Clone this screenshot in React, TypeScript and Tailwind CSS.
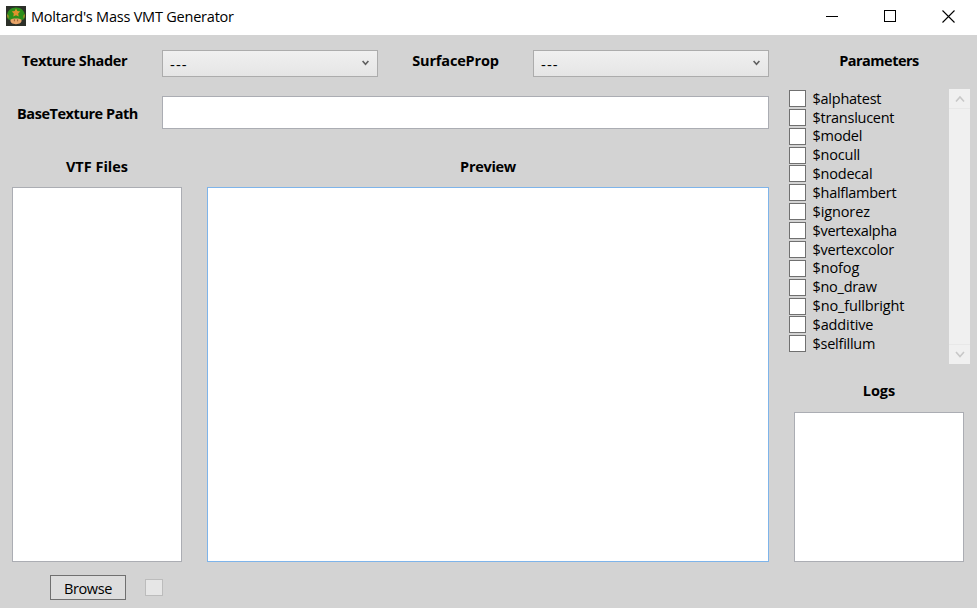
import React from "react";

const parameters: { name: string; tracking: string }[] = [
  { name: "$alphatest", tracking: "tracking-[-0.25px]" },
  { name: "$translucent", tracking: "tracking-[-0.27px]" },
  { name: "$model", tracking: "tracking-[-0.25px]" },
  { name: "$nocull", tracking: "tracking-[-0.22px]" },
  { name: "$nodecal", tracking: "tracking-[-0.22px]" },
  { name: "$halflambert", tracking: "tracking-[-0.27px]" },
  { name: "$ignorez", tracking: "tracking-[-0.12px]" },
  { name: "$vertexalpha", tracking: "tracking-[-0.32px]" },
  { name: "$vertexcolor", tracking: "tracking-[-0.25px]" },
  { name: "$nofog", tracking: "tracking-[-0.12px]" },
  { name: "$no_draw", tracking: "tracking-[-0.28px]" },
  { name: "$no_fullbright", tracking: "tracking-[-0.14px]" },
  { name: "$additive", tracking: "tracking-[-0.12px]" },
  { name: "$selfillum", tracking: "tracking-[-0.25px]" },
];

function AppIcon() {
  return (
    <svg width="20" height="20" viewBox="0 0 20 20">
      <rect width="20" height="20" fill="#2c3029" />
      <path d="M1 9.500C1.200 4.800 4.800 1.500 10 1.500s8.800 3.300 9 8c.1 3-1.300 4.600-3.300 4.600h-11.400c-2 0-3.400-1.600-3.300-4.600z" fill="#2c8f1b" />
      <path d="M10 2.500l1.300 2.500 3 .5-2.100 2.100.5 2.900-2.700-1.300-2.700 1.300.5-2.900-2.100-2.100 3-.5z" fill="#df922c" />
      <path d="M1.100 8.200c1.600.3 2.200 2.200 1.300 4.200-1.200-.9-1.600-2.600-1.300-4.200zM18.900 8.200c-1.600.3-2.200 2.200-1.300 4.200 1.200-.9 1.600-2.600 1.300-4.200z" fill="#a58a28" />
      <path d="M4.500 13.800c1.500-1.900 9.500-1.900 11 0 .6 2.600-1.700 4.400-5.500 4.400s-6.100-1.800-5.500-4.400z" fill="#e8a468" />
      <path d="M8.400 13.300v2M11.600 13.300v2" stroke="#8a5a30" strokeWidth=".9" />
    </svg>
  );
}

function Chevron({ up = false, className }: { up?: boolean; className: string }) {
  return (
    <svg width="10" height="8" viewBox="0 0 10 8" className={className} fill="none" stroke="currentColor">
      <path d={up ? "M1 6.500L5 2l4 4.500" : "M1 1L5 5.500l4-4.500"} strokeWidth="1.600" />
    </svg>
  );
}

function Select({ width }: { width: string }) {
  return (
    <div className={`flex h-[27px] shrink-0 items-center justify-between border border-[#acacac] bg-linear-to-b from-[#f0f0f0] to-[#e5e5e5] pr-2 pl-[7px] ${width}`}>
      <span className="pt-[1px] text-[15px] leading-none tracking-[1.1px]">---</span>
      <svg width="7" height="6" viewBox="0 0 7 6" fill="none" stroke="#606060" strokeWidth="1.600" className="mb-[2px]">
        <path d="M.6 1L3.500 4.300 6.400 1" />
      </svg>
    </div>
  );
}

const bold = "text-center text-[14.5px] leading-5 font-bold whitespace-nowrap";

export default function App() {
  return (
    <div className="flex h-[608px] w-[977px] flex-col overflow-hidden bg-[#d3d3d3] font-['Open_Sans','Noto_Sans',sans-serif] text-black">
      <header className="flex h-[35px] shrink-0 items-center justify-between bg-white pr-[22px] pl-[6px]">
        <div className="flex items-center gap-[5px] pb-[3px]">
          <AppIcon />
          <h1 className="pt-px text-[14.5px] leading-5 tracking-[-0.22px] whitespace-nowrap">Moltard's Mass VMT Generator</h1>
        </div>
        <div className="flex items-center pb-[3px]">
          <svg width="12" height="13" fill="none" stroke="#000" shapeRendering="crispEdges"><path d="M0 6.500h12" /></svg>
          <svg width="12" height="12" fill="none" stroke="#000" shapeRendering="crispEdges" className="mx-[46px]"><rect x=".5" y=".5" width="11" height="11" /></svg>
          <svg width="13" height="13" fill="none" stroke="#000" strokeWidth="1.100"><path d="M.5.5l12 12M12.500.5l-12 12" /></svg>
        </div>
      </header>

      <main className="flex min-h-0 flex-1 pt-[15px]">
        <div className="flex w-[769px] flex-col">
          <div className="flex">
            <div className={`w-[162px] pt-px pr-[13px] tracking-[-0.38px] ${bold}`}>Texture Shader</div>
            <Select width="w-[216px]" />
            <div className={`w-[155px] pt-px tracking-[-0.18px] ${bold}`}>SurfaceProp</div>
            <Select width="w-[236px]" />
          </div>
          <div className="mt-[19px] flex h-[33px] items-center">
            <div className={`w-[162px] pt-[3px] pr-[7px] tracking-[-0.45px] ${bold}`}>BaseTexture Path</div>
            <div className="h-full flex-1 border border-[#abadb3] bg-white" />
          </div>
          <div className="mt-[28px] flex gap-[25px] pl-3">
            <section className="w-[170px]">
              <h2 className={bold}>VTF Files</h2>
              <div className="mt-[10px] h-[375px] border border-[#abadb3] bg-white" />
              <div className="flex items-center gap-[19px] pt-[13px] pl-[38px]">
                <button className="h-[25px] w-[76px] border border-[#707070] bg-[#dddddd] pt-[2px] text-[14.5px] leading-5 tracking-[-0.35px]">Browse</button>
                <span className="h-[17px] w-[18px] border border-[#bcbcbc] bg-[#e6e6e6]" />
              </div>
            </section>
            <section className="flex-1">
              <h2 className={`tracking-[-0.3px] ${bold}`}>Preview</h2>
              <div className="mt-[10px] h-[375px] border border-[#7eb4ea] bg-white" />
            </section>
          </div>
        </div>

        <aside className="flex flex-1 flex-col pr-[7px] pl-5">
          <h2 className={`mr-[1px] pt-px tracking-[-0.5px] ${bold}`}>Parameters</h2>
          <div className="mt-[18px] flex h-[275px] justify-between">
            <ul className="pt-[1.050px]">
              {parameters.map((p) => (
                <li key={p.name} className="flex h-[18.870px] items-start gap-[6.5px]">
                  <span className="h-[17px] w-[17px] shrink-0 border border-[#707070] bg-white" />
                  <span className={`-mt-[0.3px] text-[14.5px] leading-[18px] whitespace-nowrap ${p.tracking}`}>{p.name}</span>
                </li>
              ))}
            </ul>
            <div className="flex w-[21px] flex-col items-center justify-between bg-[#f0f0f0]">
              <div className="flex h-5 w-full items-center justify-center border-b border-[#e8e8e8]">
                <Chevron up className="text-[#c8c8c8]" />
              </div>
              <div className="flex h-5 w-full items-center justify-center border-t border-[#e8e8e8]">
                <Chevron className="text-[#c8c8c8]" />
              </div>
            </div>
          </div>
          <h2 className={`mt-[17px] mr-[1px] ${bold}`}>Logs</h2>
          <div className="mt-[11px] ml-[5px] h-[150px] w-[170px] border border-[#abadb3] bg-white" />
        </aside>
      </main>
    </div>
  );
}
